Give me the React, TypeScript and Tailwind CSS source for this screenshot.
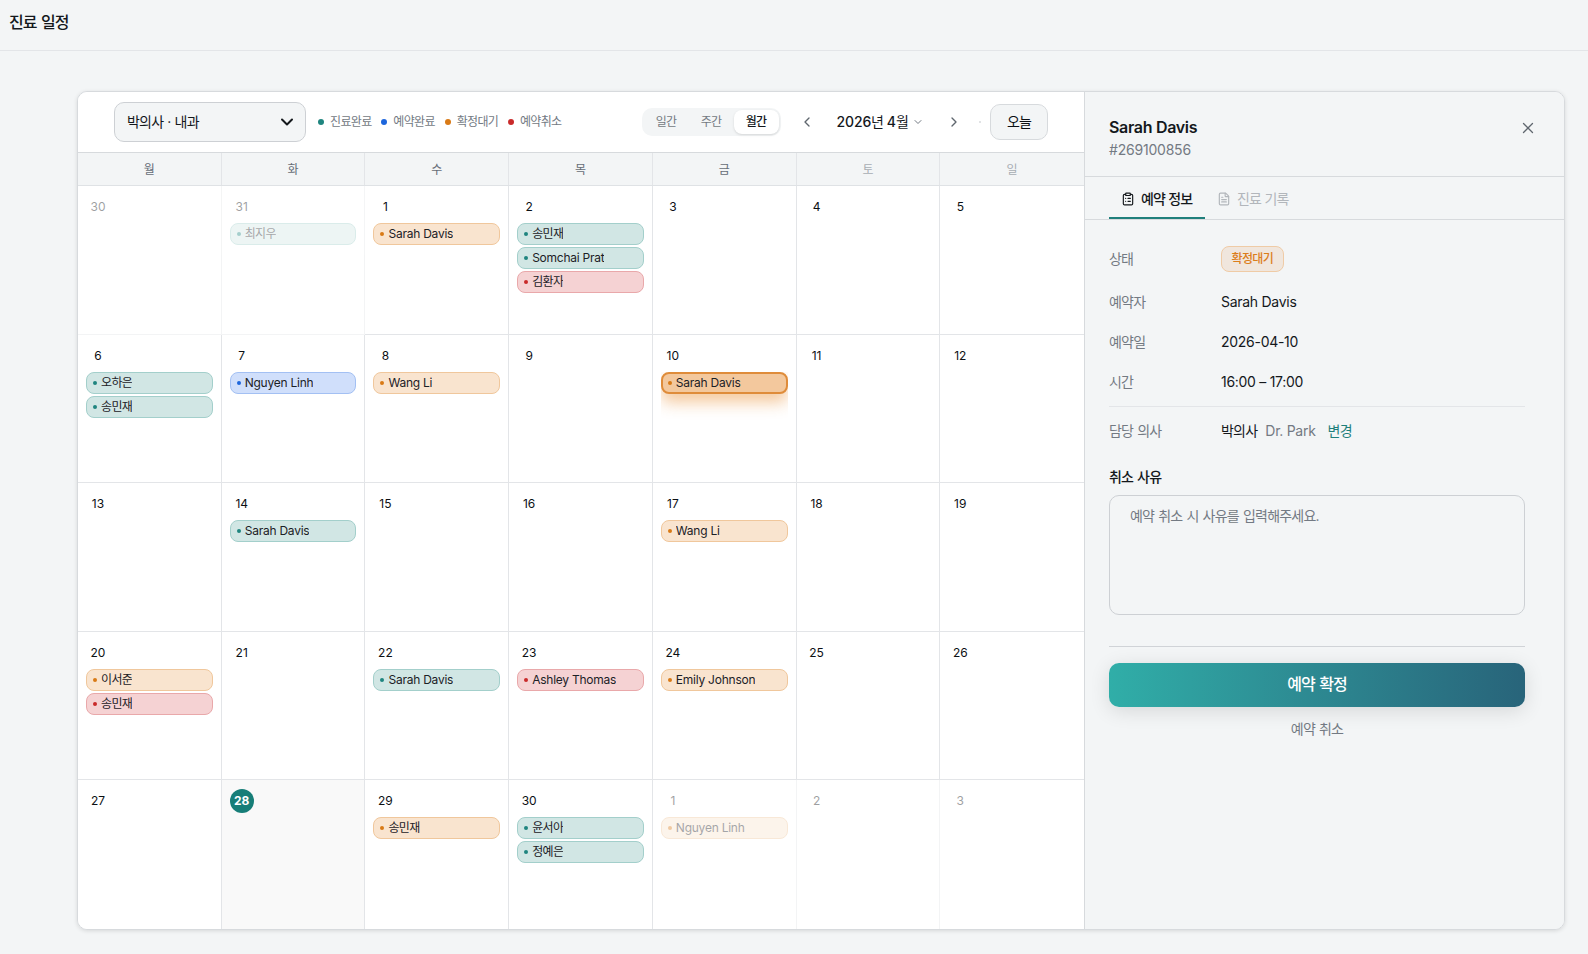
import type { ReactNode } from "react";
import { ChevronDown, ChevronLeft, ChevronRight, FileText, X } from "lucide-react";
import clsx from "clsx";

type Status = "done" | "booked" | "pending" | "cancelled";

interface Appointment {
  name: string;
  status: Status;
  selected?: boolean;
}

interface Day {
  date: number;
  outside?: boolean;
  today?: boolean;
  items?: Appointment[];
}

// Hangul and latin runs are set with different spacing
const KO = "tracking-[-0.055em] [word-spacing:0.06em]";
const EN = "tracking-[-0.02em]";

const CHIP: Record<Status, string> = {
  done: "border-[#a3cfcb] bg-[#d1e6e4]",
  booked: "border-[#a3c0f3] bg-[#d0dffb]",
  pending: "border-[#f0c79c] bg-[#f9e4cf]",
  cancelled: "border-[#e9a8aa] bg-[#f5d2d3]",
};

const DOT: Record<Status, string> = {
  done: "bg-[#1f857f]",
  booked: "bg-[#1d66dc]",
  pending: "bg-[#d97a16]",
  cancelled: "bg-[#c92a2a]",
};

const LEGEND: { label: string; status: Status }[] = [
  { label: "진료완료", status: "done" },
  { label: "예약완료", status: "booked" },
  { label: "확정대기", status: "pending" },
  { label: "예약취소", status: "cancelled" },
];

const WEEKDAYS = ["월", "화", "수", "목", "금", "토", "일"];

const APPOINTMENTS: Record<number, Appointment[]> = {
  1: [{ name: "Sarah Davis", status: "pending" }],
  2: [
    { name: "송민재", status: "done" },
    { name: "Somchai Prat", status: "done" },
    { name: "김환자", status: "cancelled" },
  ],
  6: [
    { name: "오하은", status: "done" },
    { name: "송민재", status: "done" },
  ],
  7: [{ name: "Nguyen Linh", status: "booked" }],
  8: [{ name: "Wang Li", status: "pending" }],
  10: [{ name: "Sarah Davis", status: "pending", selected: true }],
  14: [{ name: "Sarah Davis", status: "done" }],
  17: [{ name: "Wang Li", status: "pending" }],
  20: [
    { name: "이서준", status: "pending" },
    { name: "송민재", status: "cancelled" },
  ],
  22: [{ name: "Sarah Davis", status: "done" }],
  23: [{ name: "Ashley Thomas", status: "cancelled" }],
  24: [{ name: "Emily Johnson", status: "pending" }],
  29: [{ name: "송민재", status: "pending" }],
  30: [
    { name: "윤서아", status: "done" },
    { name: "정예은", status: "done" },
  ],
};

const DAYS: Day[] = [
  { date: 30, outside: true },
  { date: 31, outside: true, items: [{ name: "최지우", status: "done" }] },
  ...Array.from({ length: 30 }, (_, i) => ({
    date: i + 1,
    today: i + 1 === 28,
    items: APPOINTMENTS[i + 1],
  })),
  { date: 1, outside: true, items: [{ name: "Nguyen Linh", status: "pending" }] },
  { date: 2, outside: true },
  { date: 3, outside: true },
];

const isHangul = (text: string) => /[가-힣]/.test(text);

const ClipboardIcon = () => (
  <svg
    width="14"
    height="14"
    viewBox="0 0 24 24"
    fill="none"
    stroke="currentColor"
    strokeWidth="2"
    strokeLinecap="round"
    strokeLinejoin="round"
  >
    <rect x="8" y="2" width="8" height="4" rx="1" />
    <path d="M16 4h2a2 2 0 0 1 2 2v14a2 2 0 0 1-2 2H6a2 2 0 0 1-2-2V6a2 2 0 0 1 2-2h2" />
    <path d="M12 11h4M12 16h4M8 11h.01M8 16h.01" />
  </svg>
);

const Chip = ({ name, status, selected }: Appointment) => (
  <div
    className={clsx(
      "flex h-[22px] shrink-0 items-center gap-1 rounded-lg text-xs text-[#1c2126]",
      selected
        ? "border-2 border-[#df8c3a] bg-[#f3c89d] px-[5px] shadow-[0_8px_16px_rgba(230,130,30,0.45)]"
        : clsx("border px-1.5", CHIP[status])
    )}
  >
    <span className={clsx("size-1 rounded-full", DOT[status])} />
    <span className={clsx("truncate", isHangul(name) ? KO : EN)}>{name}</span>
  </div>
);

const DayCell = ({ day, index }: { day: Day; index: number }) => (
  <div
    className={clsx(
      "flex min-w-0 flex-col gap-1 border-[#e3e5e8] px-2 pt-[9px] pb-2",
      index % 7 !== 6 && "border-r",
      index < 28 && "border-b",
      day.outside && "opacity-40",
      day.today && "bg-[#f9f9f9]"
    )}
  >
    <span
      className={clsx(
        "flex size-6 shrink-0 items-center justify-center rounded-full text-xs",
        day.today ? "bg-[#177e78] font-bold text-white" : "text-[#0c1014]"
      )}
    >
      {day.date}
    </span>
    <div className="flex min-h-0 flex-1 flex-col gap-0.5 overflow-hidden">
      {day.items?.map((item) => (
        <Chip key={item.name} {...item} />
      ))}
    </div>
  </div>
);

const Toolbar = () => (
  <div className="flex h-[61px] shrink-0 items-center border-b border-[#d7dadd] px-9">
    <button
      className={clsx(
        "flex h-10 w-48 items-center justify-between rounded-[10px] border border-[#cdd0d4] bg-[#f3f5f6] pr-2 pl-3 text-sm text-[#14181c]",
        KO
      )}
    >
      박의사 · 내과
      <ChevronDown size={20} strokeWidth={2.4} />
    </button>
    <div className={clsx("ml-3 flex gap-[9.8px] text-xs text-[#737a83]", KO)}>
      {LEGEND.map(({ label, status }) => (
        <span key={label} className="flex items-center gap-1.5">
          <span className={clsx("size-1.5 rounded-full", DOT[status])} />
          {label}
        </span>
      ))}
    </div>
    <div className="ml-auto flex items-center">
      <div className={clsx("flex h-7 rounded-[10px] bg-[#f3f5f6] p-0.5 text-xs text-[#737a83]", KO)}>
        <button className="w-[45px]">일간</button>
        <button className="w-[45px]">주간</button>
        <button className="w-[45px] rounded-lg bg-white font-medium text-[#14181c] shadow-sm">월간</button>
      </div>
      <button className="ml-[18px] text-[#5f666e]">
        <ChevronLeft size={16} />
      </button>
      <button className="ml-[22px] flex items-center gap-1 text-sm font-medium text-[#14181c]">
        <span className="tracking-[-0.01em]">
          2026<span className="font-normal tracking-[-0.055em]">년</span> 4
          <span className="font-normal tracking-[-0.055em]">월</span>
        </span>
        <ChevronDown size={12} className="text-[#737a83]" />
      </button>
      <button className="ml-[22px] text-[#5f666e]">
        <ChevronRight size={16} />
      </button>
      <span className="mr-[9px] ml-[17px] size-0.5 rounded-full bg-[#d7dadd]" />
      <button
        className={clsx("h-9 w-[58px] rounded-[10px] border border-[#d7dadd] bg-[#f3f5f6] text-sm text-[#0c1014]", KO)}
      >
        오늘
      </button>
    </div>
  </div>
);

const Calendar = () => (
  <section className="flex min-w-0 flex-1 flex-col bg-white">
    <Toolbar />
    <div className="grid h-[33px] shrink-0 grid-cols-7 border-b border-[#dfe2e5] bg-[#f3f5f6] text-xs">
      {WEEKDAYS.map((label, i) => (
        <div
          key={label}
          className={clsx(
            "flex items-center justify-center border-[#e3e5e8] pt-px",
            i < 6 && "border-r",
            i < 5 ? "text-[#666d76]" : "text-[#a8adb3]"
          )}
        >
          {label}
        </div>
      ))}
    </div>
    <div className="grid flex-1 grid-cols-7 grid-rows-5">
      {DAYS.map((day, i) => (
        <DayCell key={i} day={day} index={i} />
      ))}
    </div>
  </section>
);

const InfoRow = ({ label, children }: { label: string; children: ReactNode }) => (
  <div className={clsx("flex h-5 items-center text-sm text-[#14181c]", EN)}>
    <span className={clsx("w-28 shrink-0 text-[#737a83]", KO)}>{label}</span>
    {children}
  </div>
);

const DetailPanel = () => (
  <aside className="flex w-[480px] shrink-0 flex-col border-l border-[#d7dadd] bg-[#f3f5f6]">
    <header className="flex h-[85px] shrink-0 items-start justify-between border-b border-[#d7dadd] pt-[23px] pr-7 pl-6">
      <div>
        <h2 className={clsx("text-base leading-6 font-semibold text-[#14181c]", EN)}>Sarah Davis</h2>
        <p className="mt-px text-sm leading-5 tracking-[-0.015em] text-[#737a83]">#269100856</p>
      </div>
      <button className="mt-1 -mr-px text-[#5f666e]">
        <X size={18} strokeWidth={1.7} />
      </button>
    </header>
    <nav className={clsx("flex h-[43px] shrink-0 border-b border-[#d7dadd] px-6 text-sm", KO)}>
      <button className="flex w-24 items-center gap-1.5 border-b-2 border-[#1f7f7b] pt-[3px] pl-3 font-medium text-[#14181c]">
        <ClipboardIcon />
        예약 정보
      </button>
      <button className="flex w-24 items-center gap-1.5 border-b-2 border-transparent pt-[3px] pl-3 text-[#b2b6bb]">
        <FileText size={14} />
        진료 기록
      </button>
    </nav>
    <div className="flex flex-col pt-[29px] pr-[39px] pl-6">
      <div className="flex flex-col gap-5 border-b border-[#e3e5e8] pb-[14px]">
        <div className="mb-[3px]">
          <InfoRow label="상태">
            <span
              className={clsx(
                "flex h-[26px] items-center rounded-lg border border-[#efcba6] bg-[#f0e6dd] px-[9.5px] text-xs font-medium text-[#dc7d1b]",
                KO
              )}
            >
              확정대기
            </span>
          </InfoRow>
        </div>
        <InfoRow label="예약자">Sarah Davis</InfoRow>
        <InfoRow label="예약일">2026-04-10</InfoRow>
        <InfoRow label="시간">16:00 – 17:00</InfoRow>
      </div>
      <div className="mt-[14px]">
        <InfoRow label="담당 의사">
          <span className={KO}>박의사</span>
          <span className="ml-2 text-[#737a83]">Dr. Park</span>
          <button className={clsx("ml-3 text-[#1f7f7b]", KO)}>변경</button>
        </InfoRow>
      </div>
      <label className={clsx("mt-[26px] text-sm leading-5 font-medium text-[#14181c]", KO)}>취소 사유</label>
      <textarea
        className={clsx(
          "mt-2 h-[120px] resize-none rounded-[10px] border border-[#cdd0d4] px-5 py-2.5 text-sm placeholder:text-[#737a83]",
          KO
        )}
        placeholder="예약 취소 시 사유를 입력해주세요."
      />
      <div className="mt-[31px] flex flex-col border-t border-[#d0d3d7] pt-4">
        <button
          className={clsx(
            "h-11 rounded-[10px] bg-linear-to-r from-[#30aea8] to-[#28647a] pb-0.5 text-base font-medium text-white shadow-[0_4px_20px_rgba(0,0,0,0.12)]",
            KO
          )}
        >
          예약 확정
        </button>
        <button className={clsx("mt-3 text-sm leading-5 text-[#737a83]", KO)}>예약 취소</button>
      </div>
    </div>
  </aside>
);

export default function App() {
  return (
    <div className="flex h-[954px] flex-col bg-[#f3f5f6] font-['Inter','Noto_Sans_CJK_KR',sans-serif]">
      <header className="flex h-[51px] shrink-0 items-start border-b border-[#e3e5e8] pt-[10px] pl-[9px]">
        <h1 className={clsx("text-base leading-6 font-medium text-[#14181c]", KO)}>진료 일정</h1>
      </header>
      <main className="flex min-h-0 flex-1 pt-10 pr-[23px] pb-6 pl-[77px]">
        <div className="flex flex-1 overflow-hidden rounded-[10px] border border-[#d7dadd] shadow-[0_1px_4px_rgba(0,0,0,0.12)]">
          <Calendar />
          <DetailPanel />
        </div>
      </main>
    </div>
  );
}
